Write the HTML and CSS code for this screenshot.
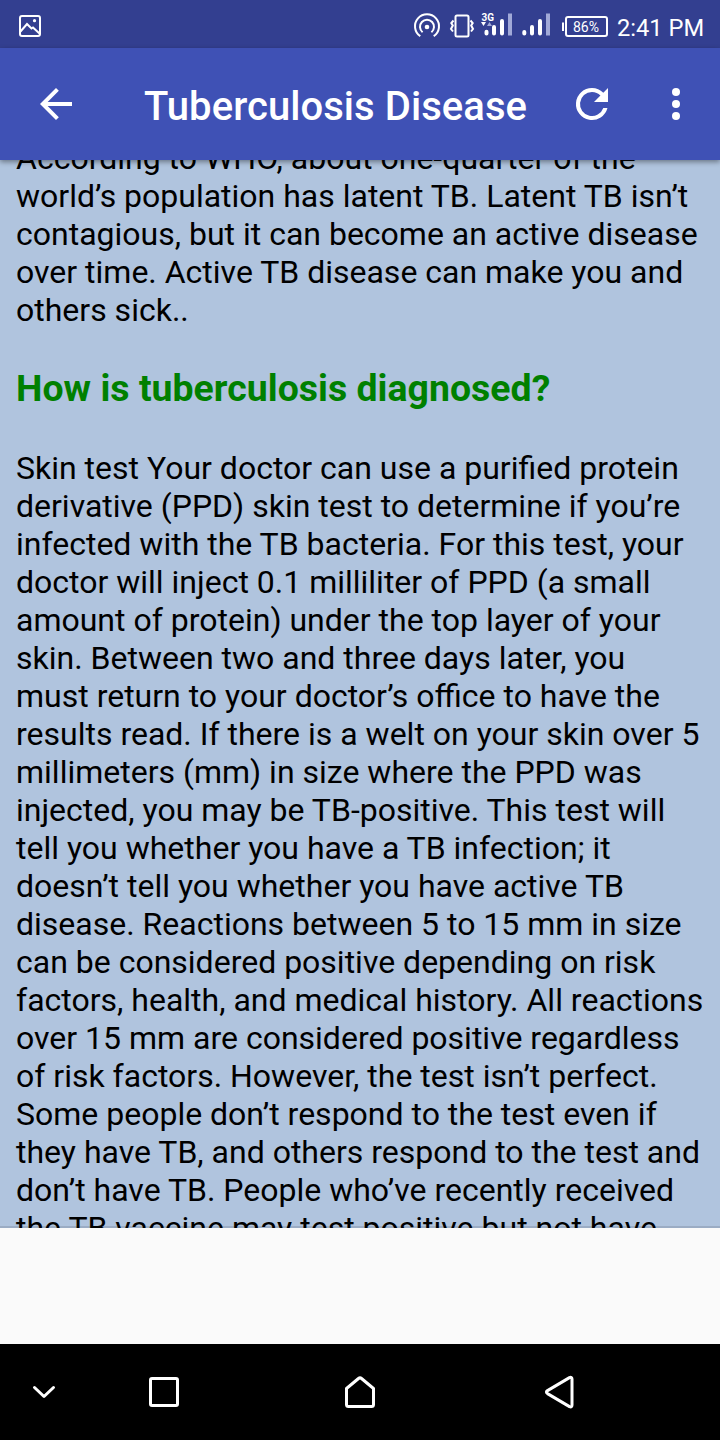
FILE: index.html
```html
<!DOCTYPE html>
<html lang="en">
<head>
<meta charset="utf-8">
<title>Tuberculosis Disease</title>
<link rel="stylesheet" href="styles.css">
</head>
<body>
<div class="screen">
  <div class="status">
    <svg class="status-left" width="24" height="24" viewBox="0 0 24 24" fill="none" stroke="#fff" stroke-width="2"><rect x="2" y="2" width="20" height="20" rx="2"/><path d="M2.500 17.500l6.500-7.500 4.500 4.500 1.500-1 6.500 6"/><circle cx="16.500" cy="6.700" r="1.600" fill="#fff" stroke="none"/></svg>
    <svg class="status-icons" width="200" height="48" viewBox="410 0 200 48" fill="none" stroke="#fff" stroke-width="2">
      <path d="M420.300 36.200A12 12 0 1 1 433.700 36.200M422.600 32.200A7 7 0 1 1 431.400 32.200"/>
      <circle cx="427" cy="27" r="2.300" fill="#fff" stroke="none"/>
      <rect x="455.500" y="15.500" width="13" height="21" rx="1.500"/>
      <path d="M453.500 20.500l-2.200 2.500 1.500 2.500-1.800 3.500 2 2.500M470.500 20.500l2.200 2.500-1.500 2.500 1.800 3.500-2 2.500"/>
      <path stroke-width="4" stroke-linecap="round" d="M486.500 31.800v1.700M494 27v6.500M502 21v12.500M524.300 32v1.500M532 27v6.500M540 21v12.500"/>
      <path stroke="#a1a9d8" stroke-width="4" d="M510 13.500v22M548 13.500v22"/>
      <path fill="#fff" stroke="none" d="M481 22h5l-2.500 4z"/><path fill="#a1a9d8" stroke="none" d="M487 26h5l-2.500-4z"/>
      <text class="network" x="481.500" y="20.500" textLength="12.500" lengthAdjust="spacingAndGlyphs">3G</text>
      <rect x="566" y="17" width="41" height="19" rx="2"/><path d="M563 22.500v8.500"/>
      <text class="battery" x="573" y="32.300">86%</text>
    </svg>
    <span class="clock">2:41 PM</span>
  </div>
  <header class="appbar">
    <svg class="back" width="48" height="48" viewBox="0 0 24 24"><path fill="#fff" d="M20 11H7.830l5.590-5.590L12 4l-8 8 8 8 1.410-1.410L7.830 13H20v-2z"/></svg>
    <h1 class="title">Tuberculosis Disease</h1>
    <svg class="refresh" width="48" height="48" viewBox="0 0 24 24"><path fill="#fff" d="M17.650 6.350A7.958 7.958 0 0 0 12 4a8 8 0 1 0 7.730 10h-2.080A6 6 0 1 1 12 6c1.660 0 3.140.69 4.220 1.780L13 11h7V4z"/></svg>
    <svg class="more" width="48" height="48" viewBox="0 0 24 24" fill="#fff"><circle cx="12" cy="6" r="2"/><circle cx="12" cy="12" r="2"/><circle cx="12" cy="18" r="2"/></svg>
  </header>
  <main class="content">
    <p class="text first">According to WHO, about one-quarter of the<br>world’s population has latent TB. Latent TB isn’t<br>contagious, but it can become an active disease<br>over time. Active TB disease can make you and<br>others sick..</p>
    <h2 class="heading">How is tuberculosis diagnosed?</h2>
    <p class="text">Skin test Your doctor can use a purified protein<br>derivative (PPD) skin test to determine if you’re<br>infected with the TB bacteria. For this test, your<br>doctor will inject 0.1 milliliter of PPD (a small<br>amount of protein) under the top layer of your<br>skin. Between two and three days later, you<br>must return to your doctor’s office to have the<br>results read. If there is a welt on your skin over 5<br>millimeters (mm) in size where the PPD was<br>injected, you may be TB-positive. This test will<br>tell you whether you have a TB infection; it<br>doesn’t tell you whether you have active TB<br>disease. Reactions between 5 to 15 mm in size<br>can be considered positive depending on risk<br>factors, health, and medical history. All reactions<br>over 15 mm are considered positive regardless<br>of risk factors. However, the test isn’t perfect.<br>Some people don’t respond to the test even if<br>they have TB, and others respond to the test and<br>don’t have TB. People who’ve recently received<br>the TB vaccine may test positive but not have</p>
  </main>
  <div class="ad-space"></div>
  <nav class="navbar">
    <svg width="720" height="96" viewBox="0 1344 720 96" fill="none" stroke="#fff" stroke-width="3" stroke-linecap="round" stroke-linejoin="round">
      <path d="M34.500 1387.500l9.500 9 9.500-9"/>
      <rect x="150.500" y="1378.500" width="27" height="27" rx="1.500"/>
      <path d="M346.500 1388.500v16q0 2 2 2h23q2 0 2-2v-16l-12-10q-1.500-1.300-3 0z"/>
      <path d="M547.500 1390.600l22-13q2.500-1 2.500 1.500v26q0 2.500-2.500 1.500l-22-13q-2.200-1.500 0-3z"/>
    </svg>
  </nav>
</div>
</body>
</html>
```
FILE: styles.css
```css
* { box-sizing: border-box; }
body { margin: 0; font-family: Roboto, "Noto Sans", sans-serif; }
svg { display: block; flex: none; }
.screen { display: flex; flex-direction: column; width: 720px; height: 1440px; overflow: hidden; background: #fafafa; }
.status { flex: none; display: flex; align-items: center; height: 48px; background: #333f90; color: #fff; }
.status-left { margin: 4px 0 0 18px; }
.status-icons { margin-left: 368px; }
.network { font: bold 11.500px Roboto, sans-serif; fill: #fff; stroke: none; }
.battery { font: 14px Roboto, sans-serif; fill: #fff; stroke: none; }
.clock { margin: 8px 0 0 7px; font-size: 23.700px; line-height: 28px; white-space: nowrap; }
.appbar { flex: none; position: relative; z-index: 1; display: flex; align-items: center; height: 112px; background: #3f51b5; color: #fff; box-shadow: 0 2px 5px rgba(0, 0, 0, .4); }
.back { margin-left: 32px; }
.title { margin: 6px 0 0 64px; width: 424px; font-size: 40px; font-weight: 500; letter-spacing: .06px; line-height: 48px; white-space: nowrap; }
.more { margin-left: 36px; }
.content { flex: none; height: 1068px; padding: 0 16px; overflow: hidden; background: #b0c4de; box-shadow: inset 0 -2px #9bacc4; color: #000; }
.text { margin: 0; font-size: 32px; line-height: 38px; white-space: nowrap; }
.first { margin-top: -21px; }
.heading { margin: 37px 0 39px; font-size: 37.440px; font-weight: 700; letter-spacing: .02px; line-height: 44px; color: #008000; white-space: nowrap; }
.ad-space { flex: none; height: 116px; background: #fafafa; }
.navbar { flex: none; height: 96px; background: #000; }
```
